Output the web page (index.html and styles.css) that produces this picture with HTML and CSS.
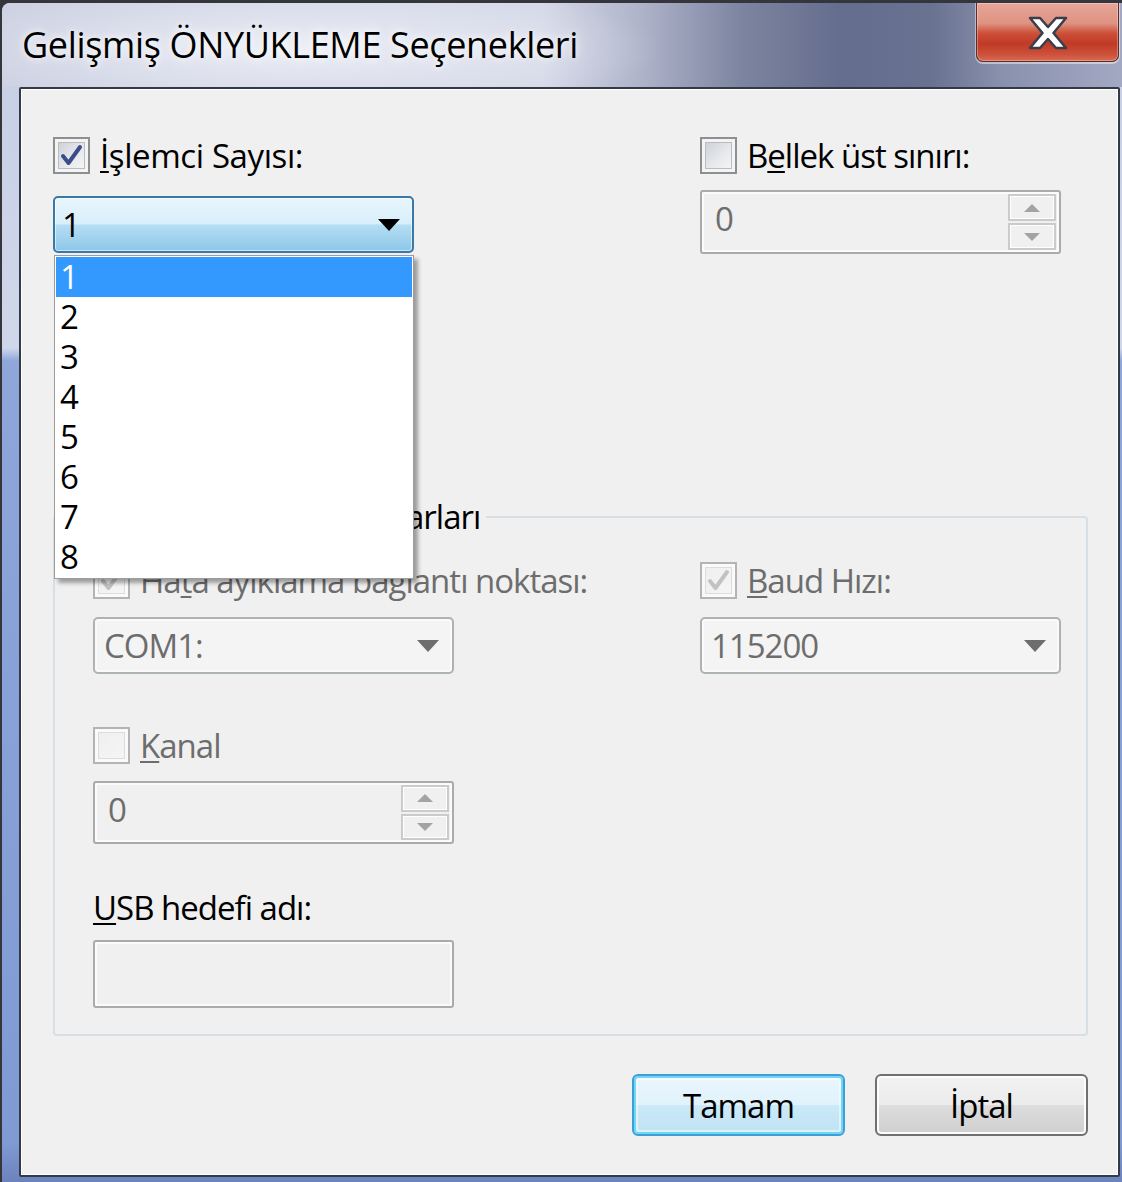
FILE: index.html
```html
<!DOCTYPE html>
<html lang="tr">
<head>
<meta charset="utf-8">
<title>Gelişmiş ÖNYÜKLEME Seçenekleri</title>
<link rel="stylesheet" href="styles.css">
</head>
<body>
<div class="window">
  <div class="frame">
    <div class="titlebar">
      <div class="title">Gelişmiş ÖNYÜKLEME Seçenekleri</div>
      <div class="close">
        <svg width="40" height="34" viewBox="0 0 40 34"><polygon points="2,2 12,2 20,11 28,2 38,2 25.5,17 38,32 28,32 20,23 12,32 2,32 14.5,17" fill="#fff" stroke="#3a3e4c" stroke-width="2.5" stroke-linejoin="round"/></svg>
      </div>
    </div>
    <div class="client">
      <div class="top-row">
        <div class="col">
          <div class="check-row">
            <span class="cb"><svg width="25" height="25" viewBox="0 0 25 25"><path d="M4 13 L9.5 20 L21 4" fill="none" stroke="#3b4d8a" stroke-width="4" stroke-linecap="round" stroke-linejoin="round"/></svg></span>
            <span class="lbl wide"><u>İ</u>şlemci Sayısı:</span>
          </div>
          <div class="combo-wrap">
            <div class="combo focused"><span class="val">1</span><span class="arrow"></span></div>
            <ul class="dropdown">
              <li class="sel">1</li><li>2</li><li>3</li><li>4</li><li>5</li><li>6</li><li>7</li><li>8</li>
            </ul>
          </div>
        </div>
        <div class="col">
          <div class="check-row">
            <span class="cb"></span>
            <span class="lbl">B<u>e</u>llek üst sınırı:</span>
          </div>
          <div class="spin top-spin"><span class="val">0</span><span class="spin-btns"><span class="sb up"></span><span class="sb down"></span></span></div>
        </div>
      </div>

      <fieldset class="group">
        <legend>Genel hata ayıklama ayarları</legend>
        <div class="group-grid">
          <div class="col">
            <div class="check-row disabled">
              <span class="cb"><svg width="25" height="25" viewBox="0 0 25 25"><path d="M4 13 L9.5 20 L21 4" fill="none" stroke="#c2c2c2" stroke-width="4" stroke-linecap="round" stroke-linejoin="round"/></svg></span>
              <span class="lbl">Ha<u>t</u>a ayıklama bağlantı noktası:</span>
            </div>
            <div class="combo disabled"><span class="val">COM1:</span><span class="arrow"></span></div>
          </div>
          <div class="col">
            <div class="check-row disabled">
              <span class="cb"><svg width="25" height="25" viewBox="0 0 25 25"><path d="M4 13 L9.5 20 L21 4" fill="none" stroke="#c2c2c2" stroke-width="4" stroke-linecap="round" stroke-linejoin="round"/></svg></span>
              <span class="lbl"><u>B</u>aud Hızı:</span>
            </div>
            <div class="combo disabled"><span class="val">115200</span><span class="arrow"></span></div>
          </div>
        </div>
        <div class="left-block">
          <div class="check-row disabled kanal">
            <span class="cb"></span>
            <span class="lbl"><u>K</u>anal</span>
          </div>
          <div class="spin inner-spin"><span class="val">0</span><span class="spin-btns"><span class="sb up"></span><span class="sb down"></span></span></div>
          <div class="usb-label"><u>U</u>SB hedefi adı:</div>
          <div class="textbox"></div>
        </div>
      </fieldset>

      <div class="buttons">
        <div class="btn default">Tamam</div>
        <div class="btn">İptal</div>
      </div>
    </div>
  </div>
</div>
</body>
</html>
```

FILE: styles.css
```css
* { box-sizing: border-box; }
html, body { margin: 0; padding: 0; }
body {
  width: 1122px;
  height: 1182px;
  overflow: hidden;
  background: #34363c;
  font-family: "Open Sans", "Noto Sans", sans-serif;
  color: #000;
}
.window {
  width: 1122px;
  height: 1182px;
  padding: 3px 0 0 2px;
  background: #34363c;
  display: flex;
}
.frame {
  flex: 1;
  display: flex;
  flex-direction: column;
  border-top-left-radius: 8px;
  overflow: hidden;
  background: linear-gradient(to bottom, #c6cee4 0, #d0d7eb 345px, #8ea6da 358px, #809ad4 1140px, #6a80bb 1182px);
}
.titlebar {
  height: 84px;
  flex: none;
  display: flex;
  justify-content: space-between;
  background:
    radial-gradient(ellipse 360px 70px at 300px 46px, rgba(236,238,246,0.95), rgba(236,238,246,0) 100%),
    linear-gradient(to right, #cdd1e2 0, #d4d8e7 540px, #aeb3ca 640px, #7d849f 740px, #656d8e 840px, #6a7292 930px, #8a91ad 1000px, #a3a9c3 1122px);
}
.title {
  padding: 20px 0 0 20px;
  font-size: 36px;
  line-height: 44px;
  letter-spacing: -0.35px;
  color: #000;
  text-shadow: 0 0 14px rgba(255,255,255,0.9), 0 0 6px rgba(255,255,255,0.8);
  white-space: nowrap;
}
.close {
  width: 143px;
  height: 59px;
  margin-right: 3px;
  border: 1px solid #5e2c24;
  border-top: none;
  border-radius: 0 0 7px 7px;
  background: linear-gradient(to bottom, #e7a598 0%, #df9382 35%, #cd5039 52%, #c13a26 70%, #cc5039 88%, #d86a52 100%);
  box-shadow: 0 1px 0 1px rgba(255,255,255,0.45), inset 0 0 0 1px rgba(255,255,255,0.3);
  display: flex;
  align-items: center;
  justify-content: center;
}
.close svg { display: block; margin-top: 2px; }

.client {
  flex: 1;
  position: relative;
  margin: 0 2px 5px 17px;
  border: 2px solid #323a48;
  border-radius: 2px;
  background: #f0f0f0;
  box-shadow: inset 0 0 0 1px #ffffff;
  padding: 48px 30px 0 32px;
  font-size: 33px;
  letter-spacing: -1px;
}
.top-row {
  display: grid;
  grid-template-columns: 361px 361px;
  column-gap: 286px;
}
.check-row {
  display: flex;
  align-items: center;
  height: 37px;
  gap: 10px;
  line-height: 37px;
  white-space: nowrap;
}
.lbl.wide { letter-spacing: -0.4px; }
.check-row.disabled .lbl { color: #6d6d6d; }
u { text-decoration-thickness: 2px; text-underline-offset: 3px; }

.cb {
  width: 37px;
  height: 37px;
  flex: none;
  border: 2px solid #8e8f8f;
  background: linear-gradient(135deg, #c7ccd3 0%, #e4e6e9 50%, #fafafa 100%);
  box-shadow: inset 0 0 0 3px #f4f4f4, inset 0 0 0 4px #b9bdc3;
  display: flex;
  align-items: center;
  justify-content: center;
}
.cb svg { display: block; }
.check-row.disabled .cb {
  border-color: #b4b4b4;
  background: linear-gradient(135deg, #eeeeee 0%, #f6f6f6 100%);
  box-shadow: inset 0 0 0 3px #fafafa, inset 0 0 0 4px #dcdcdc;
}

.combo-wrap { position: relative; margin-top: 22px; }
.combo {
  height: 57px;
  display: flex;
  align-items: center;
  justify-content: space-between;
  border-radius: 5px;
  padding: 0 12px 0 7px;
  line-height: 57px;
}
.combo.focused {
  border: 2px solid #3a78a8;
  background: linear-gradient(to bottom, #e8f5fc 0%, #d8effb 48%, #b4ddf3 52%, #8dc7e9 100%);
  box-shadow: inset 0 0 0 1px rgba(255,255,255,0.55);
}
.combo .arrow {
  width: 0;
  height: 0;
  border-left: 11px solid transparent;
  border-right: 11px solid transparent;
  border-top: 12px solid #000;
}
.combo.disabled {
  margin-top: 18px;
  border: 2px solid #adb2b5;
  background: #f4f4f4;
  box-shadow: inset 0 0 0 2px #fafafa;
  color: #6d6d6d;
  padding-left: 9px;
  padding-right: 13px;
}
.combo.disabled .arrow { border-top-color: #6d6d6d; }

.dropdown {
  position: absolute;
  left: 1px;
  top: calc(100% + 2px);
  width: 360px;
  margin: 0;
  padding: 1px;
  list-style: none;
  background: #fff;
  border: 1px solid #9c9c9c;
  box-shadow: 4px 4px 4px rgba(0,0,0,0.35);
  z-index: 5;
}
.dropdown li {
  height: 40px;
  line-height: 40px;
  padding-left: 4px;
}
.dropdown li.sel { background: #3399ff; color: #fff; }

.spin {
  display: flex;
  align-items: center;
  border: 2px solid #ababab;
  border-radius: 3px;
  background: #f0f0f0;
  box-shadow: inset 0 0 0 2px #fbfbfb;
  padding: 2px 3px 2px 13px;
  color: #6d6d6d;
}
.spin .val { padding-bottom: 7px; }
.top-spin { margin-top: 16px; height: 64px; }
.inner-spin { margin-top: 17px; height: 63px; }
.spin-btns {
  margin-left: auto;
  width: 48px;
  align-self: stretch;
  display: flex;
  flex-direction: column;
  gap: 2px;
}
.sb {
  flex: 1;
  border: 2px solid #cbcbcb;
  background: #f0f0f0;
  box-shadow: inset 0 0 0 1px #fff;
  display: flex;
  align-items: center;
  justify-content: center;
}
.sb.up::after, .sb.down::after {
  content: "";
  width: 0;
  height: 0;
  border-left: 8px solid transparent;
  border-right: 8px solid transparent;
}
.sb.up::after { border-bottom: 8px solid #a3a3a3; }
.sb.down::after { border-top: 8px solid #a3a3a3; }

.group {
  margin: 243px 0 0 0;
  padding: 25px 0 26px 38px;
  border: 2px solid #d5dfe5;
  border-radius: 4px;
  min-inline-size: 0;
}
.group legend {
  margin-left: -26px;
  padding: 0 6px;
  height: 40px;
  line-height: 40px;
}
.group-grid {
  display: grid;
  grid-template-columns: 361px 361px;
  column-gap: 246px;
}
.left-block { width: 361px; }
.kanal { margin-top: 53px; }
.usb-label {
  margin-top: 45px;
  height: 37px;
  line-height: 37px;
}
.textbox {
  margin-top: 14px;
  height: 68px;
  border: 2px solid #ababab;
  border-radius: 3px;
  background: #f0f0f0;
  box-shadow: inset 0 0 0 2px #fbfbfb;
}

.buttons {
  display: flex;
  justify-content: flex-end;
  gap: 30px;
  margin-top: 38px;
}
.btn {
  width: 213px;
  height: 62px;
  border: 2px solid #707070;
  border-radius: 6px;
  background: linear-gradient(to bottom, #f2f2f2 0%, #ebebeb 50%, #dddddd 50%, #cfcfcf 100%);
  box-shadow: inset 0 0 0 2px #fcfcfc;
  display: flex;
  align-items: center;
  justify-content: center;
  line-height: 1;
}
.btn.default {
  border-color: #3c9fd6;
  background: linear-gradient(to bottom, #eaf6fd 0%, #e0f2fc 50%, #cbe9f8 50%, #bfe2f4 100%);
  box-shadow: inset 0 0 0 2px #6fd6f6, inset 0 0 0 4px rgba(255,255,255,0.5);
}
```
